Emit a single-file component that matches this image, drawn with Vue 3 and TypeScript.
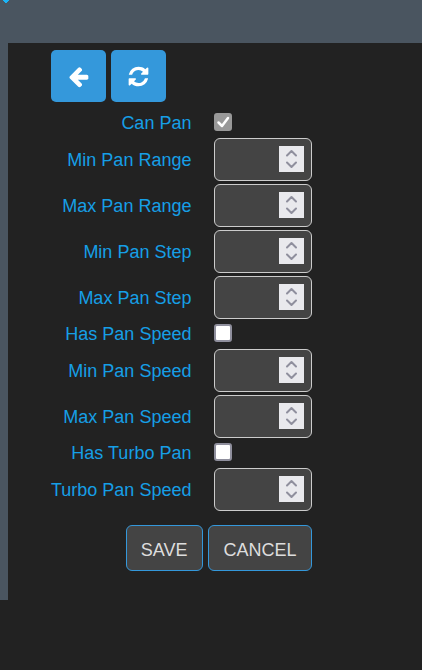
<script setup lang="ts">
import { reactive } from 'vue'

interface Field {
  id: string
  label: string
  kind: 'check' | 'number'
  disabled?: boolean
}

const fields: Field[] = [
  { id: 'can-pan', label: 'Can Pan', kind: 'check', disabled: true },
  { id: 'min-pan-range', label: 'Min Pan Range', kind: 'number' },
  { id: 'max-pan-range', label: 'Max Pan Range', kind: 'number' },
  { id: 'min-pan-step', label: 'Min Pan Step', kind: 'number' },
  { id: 'max-pan-step', label: 'Max Pan Step', kind: 'number' },
  { id: 'has-pan-speed', label: 'Has Pan Speed', kind: 'check' },
  { id: 'min-pan-speed', label: 'Min Pan Speed', kind: 'number' },
  { id: 'max-pan-speed', label: 'Max Pan Speed', kind: 'number' },
  { id: 'has-turbo-pan', label: 'Has Turbo Pan', kind: 'check' },
  { id: 'turbo-pan-speed', label: 'Turbo Pan Speed', kind: 'number' },
]

const checks = reactive<Record<string, boolean>>({ 'can-pan': true })
const numbers = reactive<Record<string, number | ''>>({})

function step(id: string, delta: number) {
  numbers[id] = Number(numbers[id] || 0) + delta
}
</script>

<template>
  <div class="page">
    <header class="topbar">
      <svg class="marker" viewBox="0 0 6 3" aria-hidden="true"><path d="M0 0h6v1h-1v1h-1v1h-2v-1h-1v-1h-1z" /></svg>
    </header>
    <main class="panel">
      <nav class="toolbar">
        <button type="button" class="tool">
          <svg viewBox="0 0 1792 1792" aria-hidden="true"><path d="M1664 896v128q0 53-32.500 90.500t-84.500 37.500h-704l293 294q38 36 38 90t-38 90l-75 76q-37 37-90 37-52 0-91-37l-651-652q-37-37-37-90 0-52 37-91l651-650q38-38 91-38 52 0 90 38l75 74q38 38 38 91t-38 91l-293 293h704q52 0 84.500 37.500t32.500 90.500z" /></svg>
        </button>
        <button type="button" class="tool">
          <svg viewBox="0 0 1792 1792" aria-hidden="true"><path d="M1639 1056q0 5-1 7-64 268-268 434.500t-478 166.500q-146 0-282.500-55t-243.500-157l-129 129q-19 19-45 19t-45-19-19-45v-448q0-26 19-45t45-19h448q26 0 45 19t19 45-19 45l-137 137q71 66 161 102t187 36q134 0 250-65t186-179q11-17 53-117 8-23 30-23h192q13 0 22.500 9.500t9.500 22.500zm25-800v448q0 26-19 45t-45 19h-448q-26 0-45-19t-19-45 19-45l138-138q-148-137-349-137-134 0-250 65t-186 179q-11 17-53 117-8 23-30 23h-199q-13 0-22.500-9.500t-9.500-22.500v-7q65-268 270-434.500t480-166.500q146 0 284 55.500t245 156.500l130-129q19-19 45-19t45 19 19 45z" /></svg>
        </button>
      </nav>
      <form class="form" @submit.prevent>
        <div class="fields">
          <template v-for="f in fields" :key="f.id">
            <label :for="f.id">{{ f.label }}</label>
            <div v-if="f.kind === 'check'" class="check-cell">
              <input :id="f.id" v-model="checks[f.id]" class="check" type="checkbox" :disabled="f.disabled" />
              <svg v-if="checks[f.id]" class="tick" viewBox="0 0 18 18" aria-hidden="true"><path d="M4.500 9.500l3.500 3.500 6-8" /></svg>
            </div>
            <div v-else class="number">
              <input :id="f.id" v-model="numbers[f.id]" type="number" />
              <div class="spinner">
                <button type="button" tabindex="-1" @click="step(f.id, 1)">
                  <svg viewBox="0 0 25 13" aria-hidden="true"><path d="M8 9.500l4.500-4.500 4.500 4.500" /></svg>
                </button>
                <button type="button" tabindex="-1" @click="step(f.id, -1)">
                  <svg viewBox="0 0 25 13" aria-hidden="true"><path d="M8 3.500l4.500 4.500 4.500-4.500" /></svg>
                </button>
              </div>
            </div>
          </template>
        </div>
        <div class="actions">
          <button type="submit">SAVE</button>
          <button type="button">CANCEL</button>
        </div>
      </form>
    </main>
  </div>
</template>

<style>
body {
  background: #222;
}
</style>

<style scoped>
.page {
  font-family: "Liberation Sans", Arial, sans-serif;
  font-size: 18px;
  line-height: 24px;
  color: #169fe6;
}
.page *,
.page {
  box-sizing: border-box;
}
.topbar {
  height: 43px;
  background: #4a5560;
}
.marker {
  display: block;
  width: 6px;
  height: 3px;
  margin-left: 3px;
  fill: #1bb4f5;
}
.panel {
  border-left: 8px solid #4a5560;
  padding: 7px 8px 29px 43px;
}
.toolbar {
  display: flex;
  gap: 5px;
  margin-bottom: 9px;
}
button {
  margin: 0;
  font: inherit;
  cursor: pointer;
}
.tool {
  display: flex;
  align-items: center;
  justify-content: center;
  width: 55px;
  height: 52px;
  padding: 0;
  border: 0;
  border-radius: 5px;
  background: #3498db;
}
.tool svg {
  width: 23px;
  height: 23px;
  fill: #fff;
}
.form {
  width: max-content;
}
.fields {
  display: grid;
  grid-template-columns: max-content 98px;
  column-gap: 23px;
  row-gap: 3px;
  align-items: center;
}
label {
  text-align: right;
}
.check-cell {
  position: relative;
  display: flex;
  align-items: center;
  height: 24px;
  padding-bottom: 2px;
}
.check {
  appearance: none;
  width: 18px;
  height: 18px;
  margin: 0;
  border: 2px solid #8f8f9d;
  border-radius: 3px;
  background: #fff;
}
.check:checked {
  border-color: #999;
  background: #999;
}
.tick {
  position: absolute;
  left: 0;
  width: 18px;
  height: 18px;
  pointer-events: none;
}
.tick path {
  fill: none;
  stroke: #fff;
  stroke-width: 2.5;
  stroke-linecap: round;
  stroke-linejoin: round;
}
.number {
  display: flex;
  align-items: center;
  height: 43px;
  padding: 0 7px 1px;
  border: 1px solid #ccc;
  border-radius: 6px;
  background: #444;
}
.number input {
  flex: 1;
  min-width: 0;
  height: 26px;
  padding: 0 4px;
  border: 0;
  outline: 0;
  background: transparent;
  color: #ddd;
  font: inherit;
  appearance: textfield;
}
.spinner {
  display: flex;
  flex-direction: column;
  width: 25px;
  background: #e9e9ed;
}
.spinner button {
  height: 13px;
  padding: 0;
  border: 0;
  background: transparent;
}
.spinner svg {
  display: block;
  width: 25px;
  height: 13px;
  fill: none;
  stroke: #8f8f9d;
  stroke-width: 2;
  stroke-linecap: round;
  stroke-linejoin: round;
}
.actions {
  display: flex;
  justify-content: flex-end;
  gap: 5px;
  margin-top: 14px;
}
.actions button {
  height: 46px;
  padding: 4px 15px 0 14px;
  border: 1px solid #3498db;
  border-radius: 6px;
  background: #444;
  color: #ddd;
}
</style>
